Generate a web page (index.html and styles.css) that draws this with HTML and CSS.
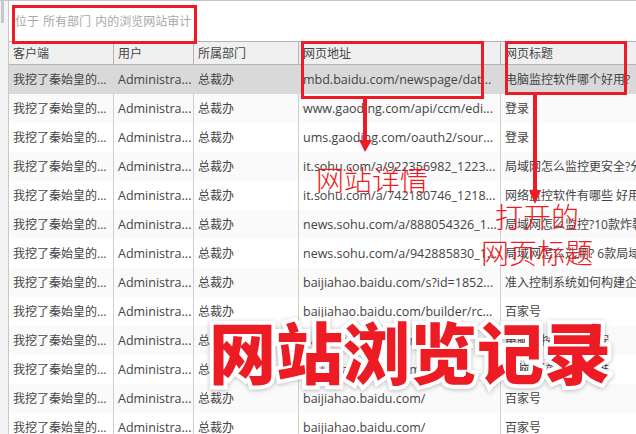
FILE: index.html
```html
<!DOCTYPE html>
<html lang="zh-CN">
<head>
    <meta charset="UTF-8">
    <title>网站浏览记录</title>
    <link rel="stylesheet" href="styles.css">
</head>
<body>
    <div class="rail"><div class="rail-thumb"></div></div>
    <main class="panel">
        <div class="caption">位于 所有部门 内的浏览网站审计</div>
        <div class="row head">
            <div>客户端</div><div>用户</div><div>所属部门</div><div>网页地址</div><div>网页标题</div>
        </div>
        <div class="row selected">
            <div>我挖了秦始皇的...</div><div>Administra...</div><div>总裁办</div><div>mbd.baidu.com/newspage/dat...</div><div>电脑监控软件哪个好用?</div>
        </div>
        <div class="row even">
            <div>我挖了秦始皇的...</div><div>Administra...</div><div>总裁办</div><div>www.gaoding.com/api/ccm/edi...</div><div>登录</div>
        </div>
        <div class="row">
            <div>我挖了秦始皇的...</div><div>Administra...</div><div>总裁办</div><div>ums.gaoding.com/oauth2/sour...</div><div>登录</div>
        </div>
        <div class="row even">
            <div>我挖了秦始皇的...</div><div>Administra...</div><div>总裁办</div><div>it.sohu.com/a/922356982_1223...</div><div>局域网怎么监控更安全?分</div>
        </div>
        <div class="row">
            <div>我挖了秦始皇的...</div><div>Administra...</div><div>总裁办</div><div>it.sohu.com/a/742180746_1218...</div><div>网络监控软件有哪些 好用</div>
        </div>
        <div class="row even">
            <div>我挖了秦始皇的...</div><div>Administra...</div><div>总裁办</div><div>news.sohu.com/a/888054326_1...</div><div>局域网怎么监控?10款炸裂</div>
        </div>
        <div class="row">
            <div>我挖了秦始皇的...</div><div>Administra...</div><div>总裁办</div><div>news.sohu.com/a/942885830_1...</div><div>局域网怎么选用?&nbsp;6款局域</div>
        </div>
        <div class="row even">
            <div>我挖了秦始皇的...</div><div>Administra...</div><div>总裁办</div><div>baijiahao.baidu.com/s?id=1852...</div><div>准入控制系统如何构建企业</div>
        </div>
        <div class="row">
            <div>我挖了秦始皇的...</div><div>Administra...</div><div>总裁办</div><div>baijiahao.baidu.com/builder/rc...</div><div>百家号</div>
        </div>
        <div class="row even">
            <div>我挖了秦始皇的...</div><div>Administra...</div><div>总裁办</div><div>baijiahao.baidu.com/</div><div>电脑监控哪个好?&nbsp;安</div>
        </div>
        <div class="row">
            <div>我挖了秦始皇的...</div><div>Administra...</div><div>总裁办</div><div>baijiahao.baidu.com/</div><div>电脑监控怎么选?&nbsp;推</div>
        </div>
        <div class="row even">
            <div>我挖了秦始皇的...</div><div>Administra...</div><div>总裁办</div><div>baijiahao.baidu.com/</div><div>百家号</div>
        </div>
        <div class="row">
            <div>我挖了秦始皇的...</div><div>Administra...</div><div>总裁办</div><div>baijiahao.baidu.com/</div><div>百家号</div>
        </div>
    </main>

    <!-- red annotations drawn over the screenshot -->
    <div class="box box-caption"></div>
    <div class="box box-url"></div>
    <div class="box box-title"></div>
    <svg class="arrows" width="636" height="434" viewBox="0 0 636 434">
        <path d="M365 97V142" stroke="#ed1c24" stroke-width="4" fill="none"/>
        <path d="M359 140H372L365 152Z" fill="#ed1c24"/>
        <path d="M535 95V194" stroke="#ed1c24" stroke-width="4" fill="none"/>
        <path d="M529 190H541L535 204Z" fill="#ed1c24"/>
    </svg>
    <div class="note note-url">网站详情</div>
    <div class="note note-open">打开的</div>
    <div class="note note-title">网页标题</div>
    <div class="banner">网站浏览记录</div>
</body>
</html>
```

FILE: styles.css
```css
*{
    margin:0;
    padding:0;
    box-sizing:border-box;
}
html,body{
    height:100%;
}
body {
    position:relative;
    display:flex;
    width:636px;
    height:434px;
    overflow:hidden;
    background:#fff;
    border-top:1px solid #c4c4c4;
    color:#444;
    font-family:"Open Sans","Noto Sans CJK SC",sans-serif;
    font-size:12px;
}
.rail {
    width:9px;
    flex:none;
    border-right:1px solid #c8c8c8;
    background:#f4f4f4;
}
.rail-thumb {
    width:3px;
    height:22px;
    margin-left:1px;
    background:#c8c8c8;
}
.panel {
    flex:1;
    min-width:0;
}
.caption {
    height:40px;
    padding:12px 0 0 6px;
    color:#a8a8a8;
    line-height:17px;
    word-spacing:1px;
}
.row {
    display:grid;
    grid-template-columns:105px 80px 105px 202px 1fr;
    height:29px;
    background:#fff;
}
.row > div {
    padding-left:4px;
    border-right:1px solid #cfcfcf;
    line-height:29px;
    white-space:nowrap;
    overflow:hidden;
}
/* the latin columns run a touch bigger than the chinese ones */
.row > div:nth-child(2),
.row > div:nth-child(4) {
    font-size:12.5px;
}
.row > div:last-child {
    border-right:0;
}
.even {
    background:#fafafa;
}
.head {
    height:24px;
    background:#f0f0f0;
    border-top:1px solid #b4b4b4;
    border-bottom:1px solid #b4b4b4;
}
.head > div {
    line-height:24px;
    border-right-color:#b4b4b4;
}
.row.head > div {
    font-size:12px;
}
.selected {
    background:#d9d9d9;
}
.selected > div {
    border-right-color:#d9d9d9;
}
.box {
    position:absolute;
    border:3px solid #ed1c24;
}
.box-caption {
    left:12px;
    top:4px;
    width:185px;
    height:39px;
}
.box-url {
    left:301px;
    top:40px;
    width:183px;
    height:58px;
}
.box-title {
    left:505px;
    top:40px;
    width:122px;
    height:54px;
}
.arrows {
    position:absolute;
    left:0;
    top:-1px;
}
.note {
    position:absolute;
    color:#ed1c24;
    font-family:"Noto Sans CJK SC",sans-serif;
    font-size:28px;
    font-weight:300;
    line-height:32px;
    white-space:nowrap;
}
.note-url {
    left:316px;
    top:162px;
}
.note-open {
    left:495px;
    top:199px;
}
.note-title {
    left:481px;
    top:235px;
}
.banner {
    position:absolute;
    left:209px;
    top:309px;
    color:#ed1c24;
    font-family:"Noto Sans CJK SC",sans-serif;
    font-size:67px;
    font-weight:900;
    line-height:80px;
    white-space:nowrap;
    -webkit-text-stroke:8px #fff;
    paint-order:stroke fill;
    filter:drop-shadow(0 1px 2px rgba(0,0,0,.25));
}
```
